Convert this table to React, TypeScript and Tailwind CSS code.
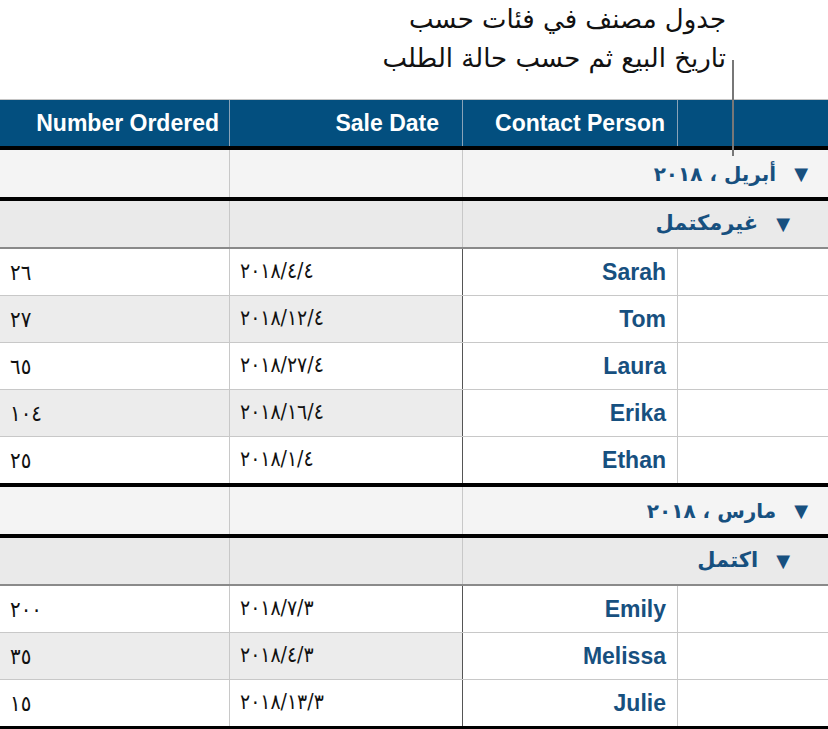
import React from "react";

const LATIN = { fontFamily: '"Liberation Sans", Arial, sans-serif' };
const ARABIC = { fontFamily: '"DejaVu Sans", "Noto Sans", sans-serif' };
const DIGITS = { fontFamily: '"DejaVu Sans Condensed", "DejaVu Sans", sans-serif' };

type Row = { name: string; date: string; qty: string };

const GROUPS: { label: string; status: string; rows: Row[] }[] = [
  {
    label: "أبريل ، ٢٠١٨",
    status: "غيرمكتمل",
    rows: [
      { name: "Sarah", date: "٢٠١٨/٤/٤", qty: "٢٦" },
      { name: "Tom", date: "٢٠١٨/١٢/٤", qty: "٢٧" },
      { name: "Laura", date: "٢٠١٨/٢٧/٤", qty: "٦٥" },
      { name: "Erika", date: "٢٠١٨/١٦/٤", qty: "١٠٤" },
      { name: "Ethan", date: "٢٠١٨/١/٤", qty: "٢٥" },
    ],
  },
  {
    label: "مارس ، ٢٠١٨",
    status: "اكتمل",
    rows: [
      { name: "Emily", date: "٢٠١٨/٧/٣", qty: "٢٠٠" },
      { name: "Melissa", date: "٢٠١٨/٤/٣", qty: "٣٥" },
      { name: "Julie", date: "٢٠١٨/١٣/٣", qty: "١٥" },
    ],
  },
];

const COLS = "grid grid-cols-[229px_233px_215px_151px]";

function GroupRow({ label, sub }: { label: string; sub?: boolean }) {
  const bg = sub ? "bg-[#eaeaea]" : "bg-[#f4f4f4]";
  return (
    <div className={`${COLS} ${sub ? "h-[46px]" : "h-[47px]"} ${bg}`}>
      <div />
      <div className="border-l border-[#c8c8c8]" />
      <div
        dir="rtl"
        className={`col-span-2 flex items-center gap-[18px] border-l border-[#c8c8c8] ${sub ? "pr-[38px]" : "pr-[20px]"} text-[20px] font-bold text-[#17507f]`}
        style={ARABIC}
      >
        <span className="text-[18px] leading-none">▼</span>
        <span className={sub ? "text-[21px]" : ""}>{label}</span>
      </div>
    </div>
  );
}

function DataRow({ row, banded, last }: { row: Row; banded: boolean; last: boolean }) {
  const band = banded ? "bg-[#ececec]" : "bg-white";
  return (
    <div className={`${COLS} ${last ? "h-[46px]" : "h-[47px] border-b border-[#c8c8c8]"}`}>
      <div className={`${band} flex items-center pl-[10px] text-[22px] text-[#111]`} style={DIGITS}>
        {row.qty}
      </div>
      <div
        dir="ltr"
        className={`${band} flex items-center border-l border-[#c8c8c8] pl-[10px] text-[21px] text-[#111]`}
        style={DIGITS}
      >
        {row.date}
      </div>
      <div
        className="flex items-center justify-end border-l border-[#555] bg-white pr-[11px] text-[23px] font-bold text-[#17507f]"
        style={LATIN}
      >
        {row.name}
      </div>
      <div className="border-l border-[#c8c8c8] bg-white" />
    </div>
  );
}

export default function App() {
  return (
    <div className="relative h-[729px] w-[828px] overflow-hidden bg-white">
      {/* caption */}
      <div dir="rtl" className="h-[99px] pr-[102px] pt-0 text-[26px] leading-[39px] text-[#111]" style={ARABIC}>
        <div>جدول مصنف في فئات حسب</div>
        <div>تاريخ البيع ثم حسب حالة الطلب</div>
      </div>
      <div className="absolute left-[732px] top-[60px] h-[96px] w-[2px] bg-[#777]" />

      {/* table */}
      <div className="border-t border-[#c4c4c4]">
        <div
          className={`${COLS} h-[50px] border-b-4 border-black bg-[#034f7f] text-[23px] font-bold text-white`}
          style={LATIN}
        >
          <div className="flex items-center justify-end pr-[10px]">Number Ordered</div>
          <div className="flex items-center justify-end border-l border-[#8aa3b8] pr-[23px]">Sale Date</div>
          <div className="flex items-center justify-end border-l border-[#8aa3b8] pr-[12px]">Contact Person</div>
          <div className="border-l border-[#8aa3b8]" />
        </div>

        {GROUPS.map((g, gi) => (
          <div key={g.label} className={gi > 0 ? "border-t-4 border-black" : ""}>
            <div className="border-b-4 border-black">
              <GroupRow label={g.label} />
            </div>
            <div className="border-b-2 border-[#8a8a8a]">
              <GroupRow label={g.status} sub />
            </div>
            {g.rows.map((r, i) => (
              <DataRow key={r.name} row={r} banded={i % 2 === 1} last={i === g.rows.length - 1} />
            ))}
          </div>
        ))}
        <div className="h-[4px] bg-black" />
      </div>
    </div>
  );
}
